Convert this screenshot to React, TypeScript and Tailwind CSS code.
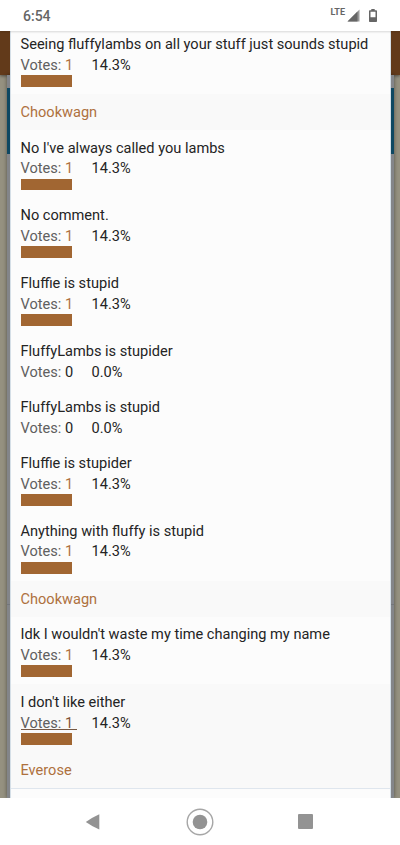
type Option = {
  title: string;
  votes: number;
  percent: string;
  voter?: string;
  active?: boolean;
};

const options: Option[] = [
  { title: "Seeing fluffylambs on all your stuff just sounds stupid", votes: 1, percent: "14.3%", voter: "Chookwagn" },
  { title: "No I've always called you lambs", votes: 1, percent: "14.3%" },
  { title: "No comment.", votes: 1, percent: "14.3%" },
  { title: "Fluffie is stupid", votes: 1, percent: "14.3%" },
  { title: "FluffyLambs is stupider", votes: 0, percent: "0.0%" },
  { title: "FluffyLambs is stupid", votes: 0, percent: "0.0%" },
  { title: "Fluffie is stupider", votes: 1, percent: "14.3%" },
  { title: "Anything with fluffy is stupid", votes: 1, percent: "14.3%", voter: "Chookwagn" },
  { title: "Idk I wouldn't waste my time changing my name", votes: 1, percent: "14.3%" },
  { title: "I don't like either", votes: 1, percent: "14.3%", voter: "Everose", active: true },
];

function StatusBar() {
  return (
    <header className="relative z-10 flex h-[31px] shrink-0 items-start justify-between bg-white pr-[23px] pl-[23px] text-[#666] shadow-[0_1px_2px_rgba(0,0,0,0.15)]">
      <span className="pt-[7px] text-[14px] leading-[18px] font-medium">6:54</span>
      <div className="flex items-start">
        <span className="pt-[7px] text-[9px] leading-[10px] font-bold">LTE</span>
        <svg className="mt-[9px] ml-[2px]" width="13" height="13" viewBox="0 0 13 13">
          <path d="M12.5.5v12H.5z" fill="#999" />
          <path d="M10.5 2.5v10H.5z" fill="#666" />
        </svg>
        <svg className="mt-[9px] ml-[9px]" width="8" height="13" viewBox="0 0 8 13">
          <path d="M2.3 0h3.4v1.2h1.5q.8 0 .8.8v10.2q0 .8-.8.8H.8q-.8 0-.8-.8V2q0-.8.8-.8h1.5zM1.5 2.7v5.6h5V2.7z" fill="#666" fillRule="evenodd" />
        </svg>
      </div>
    </header>
  );
}

// Dimmed page, only visible along both sides of the results panel
function Backdrop() {
  return (
    <div className="absolute inset-0 bg-[#959180]">
      <div className="h-[44px] bg-[#623a1a] shadow-[0_1px_3px_rgba(0,0,0,0.5)]" />
      <div className="mx-[6.5px] h-[723px] bg-[#838589] pt-[13px] shadow-[0_0_4px_rgba(0,0,0,0.45)]">
        <div className="h-[66px] bg-[#0e4862]" />
        <div className="mt-[450px] h-px bg-[#73767b]" />
      </div>
    </div>
  );
}

function PollOption({ title, votes, percent, voter, active }: Option) {
  return (
    <li className={active ? "bg-[#f9f9f9]" : ""}>
      <div className="px-[9.5px] pt-[7.6px] pb-[7.5px]">
        <p className="h-[20.6px] leading-[20.6px] whitespace-nowrap">{title}</p>
        <div className="flex h-[20.4px] leading-[20.4px]">
          <span className={active ? "h-[17px] w-[56px] border-b border-[#765843] text-[#606060]" : "w-[56px] text-[#606060]"}>
            Votes: <span className={votes && !active ? "text-[#ae713e]" : votes ? "text-[#825335]" : "text-[#242424]"}>{votes}</span>
          </span>
          <span className="ml-[15px]">{percent}</span>
        </div>
        {votes > 0 && <div className="h-[11.7px] w-[51px] bg-[#a16632]" />}
      </div>
      {voter && (
        <div className="h-[35.6px] bg-[#f9f9f9] px-[9.5px] leading-[36.6px] text-[#ae713e]">{voter}</div>
      )}
    </li>
  );
}

function NavBar() {
  return (
    <nav className="flex h-[47px] shrink-0 items-center justify-between bg-white pr-[87px] pl-[85px] text-[#939393]">
      <svg width="15" height="16" viewBox="0 0 15 16" fill="currentColor">
        <path d="M14.3.2v15.4Q7 12.2.8 7.9 7 3.5 14.3.2z" />
      </svg>
      <svg className="ml-px" width="28" height="28" viewBox="0 0 28 28" fill="currentColor">
        <circle cx="14" cy="14" r="12.8" fill="none" stroke="#a6a6a6" strokeWidth="1.4" />
        <circle cx="14" cy="14" r="7.3" />
      </svg>
      <div className="h-[15px] w-[15px] rounded-[1px] bg-[#939393]" />
    </nav>
  );
}

export default function App() {
  return (
    <div className="flex h-[845px] w-[400px] flex-col overflow-hidden bg-white font-['Roboto',sans-serif]">
      <StatusBar />
      <main className="relative h-[767px] shrink-0 overflow-hidden">
        <Backdrop />
        <section className="relative mr-[9px] ml-[10px] h-[767px] overflow-hidden border-x border-[#d5dfe7] bg-[#fcfcfc] text-[14.58px] text-[#242424]">
          <ul className="-mt-[4.3px] border-b border-[#dfe6ee]">
            {options.map((option) => (
              <PollOption key={option.title} {...option} />
            ))}
          </ul>
        </section>
      </main>
      <NavBar />
    </div>
  );
}
